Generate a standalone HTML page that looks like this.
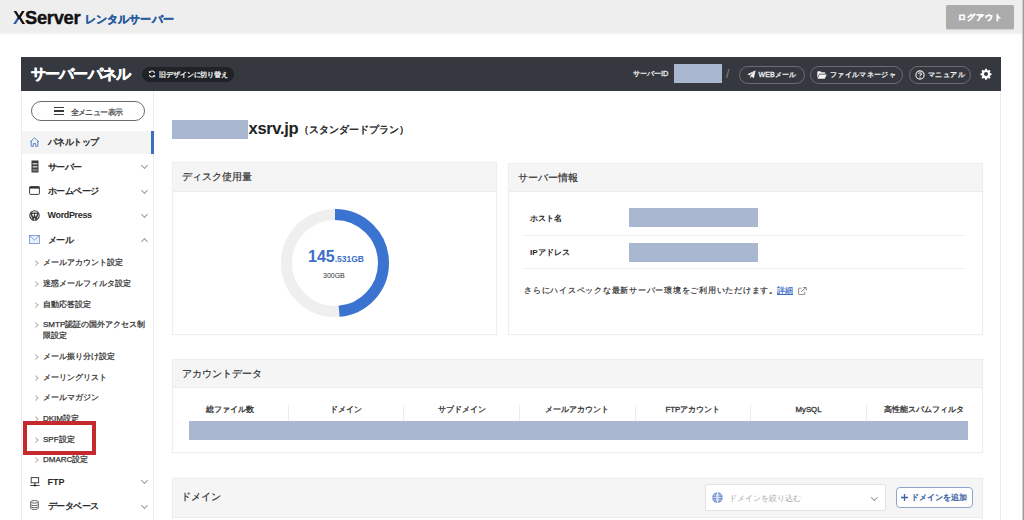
<!DOCTYPE html>
<html lang="ja">
<head>
<meta charset="utf-8">
<style>
*{box-sizing:border-box;margin:0;padding:0}
html,body{width:1024px;height:520px;overflow:hidden;background:#fff;font-family:"Liberation Sans",sans-serif;color:#333}
.abs{position:absolute}
#top{left:0;top:0;width:1024px;height:33px;background:#eeeeee;box-shadow:0 1px 2px rgba(0,0,0,.06)}
#rline{left:1022px;top:0;width:2px;height:520px;background:linear-gradient(to right,#d0d0d0 50%,#9c9c9c 50%)}
#logo{left:13px;top:8px;font-size:18.3px;line-height:20px;font-weight:bold;color:#111;letter-spacing:-0.25px;-webkit-text-stroke:0.4px #111;white-space:nowrap}
#logo .x{-webkit-text-stroke:0;background:linear-gradient(to top right,#2a5fa8 0%,#2a5fa8 38%,#111 46%);-webkit-background-clip:text;background-clip:text;color:transparent}
#logo .jp{position:absolute;left:71.5px;-webkit-text-stroke:0.35px #2a5c9f;top:1px;font-size:11.1px;color:#2a5c9f;letter-spacing:0.2px}
#logout{left:946px;top:5px;width:68px;height:23.5px;background:#ababab;color:#fff;font-size:8px;letter-spacing:0.9px;text-indent:0.9px;font-weight:bold;-webkit-text-stroke:0.3px #fff;text-align:center;line-height:25px;border-radius:1.5px;box-shadow:0 1px 1px rgba(0,0,0,.12)}
#ph{left:21px;top:57px;width:980px;height:34px;background:#35383f}
#ptitle{left:31px;top:64px;font-size:15px;font-weight:bold;-webkit-text-stroke:0.45px #fff;color:#fff;line-height:20px;white-space:nowrap;letter-spacing:-0.85px}
.pill{position:absolute;border:1px solid #6a6e73;border-radius:10px}
.htxt{color:#f0f0f0;font-weight:normal;-webkit-text-stroke:0.3px #f0f0f0;white-space:nowrap;line-height:10px}
#oldd{left:141px;top:66px;width:94px;height:16px;background:#24282c;border:none}
#sid{left:633px;top:68.5px;font-size:7.4px;font-weight:normal;-webkit-text-stroke:0.3px #f0f0f0;color:#f0f0f0;white-space:nowrap}
.blue{background:#a9b8d0}
#pb{left:21px;top:91px;width:980px;height:429px;border-left:1px solid #ececec;border-right:1px solid #ececec}
#side{left:22px;top:91px;width:132px;height:429px;border-right:1px solid #ececec}
.mi{position:absolute;left:22px;width:131px;height:24px;font-size:9px;letter-spacing:-0.5px;font-weight:normal;-webkit-text-stroke:0.4px #2a2a2a;color:#2a2a2a;white-space:nowrap}
.mi .t{position:absolute;left:25.5px;top:0;line-height:24px}
.mi .chev{position:absolute;left:119.5px;top:8.5px;width:5px;height:5px;border-right:1px solid #9a9a9a;border-bottom:1px solid #9a9a9a;transform:rotate(45deg)}
.mi .chev.up{top:11px;transform:rotate(-135deg)}
.si{position:absolute;left:22px;width:131px;font-size:8px;color:#333;-webkit-text-stroke:0.25px #333;white-space:nowrap;line-height:10.5px}
.si .t{position:absolute;left:21px;top:0}
.si .c{position:absolute;left:11.8px;top:3.3px;width:3.5px;height:3.5px;border-right:1px solid #b0b0b0;border-top:1px solid #b0b0b0;transform:rotate(45deg)}
.th{position:absolute;top:405px;width:115.6px;text-align:center;font-size:7.8px;font-weight:normal;color:#333;-webkit-text-stroke:0.3px #333;white-space:nowrap;line-height:10px}
.card{position:absolute;border:1px solid #eeeeee;background:#fff;box-shadow:0 0 1px rgba(0,0,0,.05)}
.card .hd{position:absolute;left:0;top:0;right:0;background:#f5f5f5;border-bottom:1px solid #ececec;font-size:9.5px;color:#333;padding-left:9px;white-space:nowrap;-webkit-text-stroke:0.2px #333}
</style>
</head>
<body>
<div id="top" class="abs"></div>
<div id="rline" class="abs"></div>
<div id="logo" class="abs"><span class="x">X</span>Server<span class="jp">レンタルサーバー</span></div>
<div id="logout" class="abs">ログアウト</div>

<div id="ph" class="abs"></div>
<div id="ptitle" class="abs">サーバーパネル</div>
<div class="abs" style="left:142px;top:66.5px;width:92px;height:15.5px;background:#1f2327;border-radius:8px"></div>
<svg class="abs" style="left:147.5px;top:70px" width="8" height="8" viewBox="0 0 8 8"><path d="M6.6 3.2A2.7 2.7 0 0 0 1.6 2.4" fill="none" stroke="#eee" stroke-width="1.1"/><path d="M1.4 4.8A2.7 2.7 0 0 0 6.4 5.6" fill="none" stroke="#eee" stroke-width="1.1"/><path d="M0.6 0.9L1.1 3.3L3.2 2.2Z" fill="#eee"/><path d="M7.4 7.1L6.9 4.7L4.8 5.8Z" fill="#eee"/></svg>
<div class="abs htxt" style="left:159px;top:69.5px;font-size:7px;letter-spacing:-0.1px">旧デザインに切り替え</div>
<div id="sid" class="abs">サーバーID</div>
<div class="abs blue" style="left:674px;top:63.5px;width:48px;height:19.5px"></div>
<div class="abs" style="left:726px;top:66px;font-size:12px;color:#888;line-height:16px">/</div>
<div class="pill" style="left:739px;top:65.5px;width:66px;height:18px"></div>
<svg class="abs" style="left:746.5px;top:69.5px" width="9" height="9" viewBox="0 0 9 9"><path d="M8.7 0.3L0.3 4.3L2.6 5.2L7.3 1.6L3.4 5.6L3.3 8.6L4.6 6.4L6.8 8.3Z" fill="#f2f2f2"/></svg>
<div class="abs htxt" style="left:758.5px;top:69.5px;font-size:7px;letter-spacing:0.1px">WEBメール</div>
<div class="pill" style="left:810px;top:65.5px;width:93px;height:18px"></div>
<svg class="abs" style="left:817px;top:70.5px" width="10" height="8" viewBox="0 0 10 8"><path d="M0.3 1.2Q0.3 0.3 1.2 0.3H3.4L4.3 1.3H7.6Q8.3 1.3 8.3 2V2.8H2.4L0.3 7Z" fill="#f2f2f2"/><path d="M2.6 3.4H9.8L7.8 7.7H0.5Z" fill="#f2f2f2"/></svg>
<div class="abs htxt" style="left:830px;top:69.5px;font-size:7px;letter-spacing:0.35px">ファイルマネージャ</div>
<div class="pill" style="left:909px;top:65.5px;width:62px;height:18px"></div>
<svg class="abs" style="left:915.3px;top:69.8px" width="10" height="10" viewBox="0 0 10 10"><circle cx="5" cy="5" r="4.1" fill="none" stroke="#eee" stroke-width="1.1"/><path d="M3.6 4Q3.6 2.7 5 2.7Q6.4 2.7 6.4 3.9Q6.4 4.6 5.5 5Q5 5.3 5 6" fill="none" stroke="#eee" stroke-width="1.1"/><circle cx="5" cy="7.3" r="0.65" fill="#eee"/></svg>
<div class="abs htxt" style="left:928px;top:69.5px;font-size:7px;letter-spacing:0.4px">マニュアル</div>
<svg class="abs" style="left:979.5px;top:68.3px" width="12" height="12" viewBox="0 0 24 24"><path fill="#fff" d="M13.7 1.5l.6 2.8c.7.2 1.3.5 1.9.8l2.4-1.6 2.4 2.4-1.6 2.4c.3.6.6 1.2.8 1.9l2.8.6v3.4l-2.8.6c-.2.7-.5 1.3-.8 1.9l1.6 2.4-2.4 2.4-2.4-1.600c-.6.3-1.2.6-1.9.8l-.6 2.8h-3.4l-.6-2.8c-.7-.2-1.300-.5-1.9-.8l-2.4 1.6-2.4-2.4 1.6-2.4c-.3-.6-.6-1.2-.8-1.9l-2.8-.6v-3.4l2.8-.6c.2-.7.5-1.3.8-1.9l-1.6-2.4 2.4-2.4 2.4 1.6c.6-.3 1.2-.6 1.9-.8l.6-2.8z M12 8a4 4 0 1 0 0 8a4 4 0 1 0 0-8z" fill-rule="evenodd"/></svg>
<div id="pb" class="abs"></div>
<div id="side" class="abs"></div>

<div class="abs" style="left:31px;top:101px;width:114px;height:20px;border:1px solid #6a6a6a;border-radius:10px"></div>
<div class="abs" style="left:54.3px;top:107.3px;width:9.7px;height:7.8px;border-top:1.6px solid #3a3a3a;border-bottom:1.6px solid #3a3a3a"></div>
<div class="abs" style="left:54.3px;top:110.4px;width:9.7px;height:1.6px;background:#3a3a3a"></div>
<div class="abs" style="left:70.5px;top:107.5px;font-size:8px;letter-spacing:-0.6px;color:#444;line-height:10px;-webkit-text-stroke:0.25px #444;white-space:nowrap">全メニュー表示</div>

<div class="abs" style="left:22px;top:131px;width:129px;height:23px;background:#f4f4f4"></div>
<div class="abs" style="left:151px;top:131px;width:3px;height:23px;background:#3b6fc0"></div>
<div class="mi" style="top:130px"><span class="t">パネルトップ</span></div>
<div class="mi" style="top:154.5px"><span class="t">サーバー</span><span class="chev"></span></div>
<div class="mi" style="top:179px"><span class="t">ホームページ</span><span class="chev"></span></div>
<div class="mi" style="top:203px"><span class="t" style="font-weight:bold;-webkit-text-stroke:0;letter-spacing:-0.35px">WordPress</span><span class="chev"></span></div>
<div class="mi" style="top:228px"><span class="t">メール</span><span class="chev up"></span></div>

<div class="si" style="top:258px"><span class="c"></span><span class="t">メールアカウント設定</span></div>
<div class="si" style="top:278.5px"><span class="c"></span><span class="t">迷惑メールフィルタ設定</span></div>
<div class="si" style="top:299.5px"><span class="c"></span><span class="t">自動応答設定</span></div>
<div class="si" style="top:320px"><span class="c"></span><span class="t">SMTP認証の国外アクセス制<br>限設定</span></div>
<div class="si" style="top:352px"><span class="c"></span><span class="t">メール振り分け設定</span></div>
<div class="si" style="top:372.5px"><span class="c"></span><span class="t">メーリングリスト</span></div>
<div class="si" style="top:393px"><span class="c"></span><span class="t">メールマガジン</span></div>
<div class="si" style="top:414px"><span class="c"></span><span class="t">DKIM設定</span></div>
<div class="si" style="top:435px"><span class="c"></span><span class="t">SPF設定</span></div>
<div class="si" style="top:455px"><span class="c"></span><span class="t">DMARC設定</span></div>
<div class="mi" style="top:469.5px"><span class="t" style="font-weight:bold;-webkit-text-stroke:0;letter-spacing:0">FTP</span><span class="chev"></span></div>
<div class="mi" style="top:494px"><span class="t">データベース</span><span class="chev"></span></div>

<svg class="abs" style="left:29px;top:136.5px" width="11" height="10" viewBox="0 0 11 10"><path d="M1 5L5.5 0.9L10 5M2.2 4V9.3H4.3V6.6H6.7V9.3H8.8V4" fill="none" stroke="#5b84cc" stroke-width="1" stroke-linejoin="round"/></svg>
<svg class="abs" style="left:30.5px;top:160px" width="8" height="13" viewBox="0 0 8 13"><rect x="0.5" y="0.5" width="7" height="12" fill="#3a3a3a"/><rect x="1.6" y="3.3" width="4.8" height="1.1" fill="#fff"/><rect x="1.6" y="6.3" width="4.8" height="1.1" fill="#fff"/><rect x="1.4" y="8.8" width="5.2" height="2.6" fill="#777"/></svg>
<svg class="abs" style="left:29px;top:186px" width="11" height="9" viewBox="0 0 11 9"><rect x="0.6" y="0.6" width="9.8" height="7.8" rx="0.8" fill="none" stroke="#333" stroke-width="0.95"/><rect x="0.6" y="0.6" width="9.8" height="2" fill="#333"/></svg>
<svg class="abs" style="left:29px;top:209.8px" width="11" height="11" viewBox="0 0 11 11"><circle cx="5.5" cy="5.5" r="4.7" fill="none" stroke="#3a3a3a" stroke-width="1.1"/><path d="M2.1 3.4L4.1 9.2L5.5 5.6L6.9 9.2L8.9 3.4M1.5 3.3H4.5M4.6 3.3H6.9M7.3 3.3H9.6" fill="none" stroke="#3a3a3a" stroke-width="1.5"/></svg>
<svg class="abs" style="left:29px;top:234.5px" width="11" height="9" viewBox="0 0 11 9"><rect x="0.5" y="0.5" width="10" height="8" fill="#eaf0fa" stroke="#7b9bd6" stroke-width="0.9"/><path d="M0.8 0.9L5.5 5L10.2 0.9" fill="none" stroke="#7b9bd6" stroke-width="0.9"/></svg>
<svg class="abs" style="left:30px;top:477px" width="10" height="10" viewBox="0 0 10 10"><rect x="1.2" y="0.6" width="7.4" height="5.2" fill="none" stroke="#444" stroke-width="1"/><path d="M4.9 5.8V8.3M0.3 8.5H9.6" stroke="#444" stroke-width="1"/><circle cx="4.9" cy="8.4" r="1" fill="#222"/></svg>
<svg class="abs" style="left:30px;top:500px" width="9" height="10" viewBox="0 0 9 10"><ellipse cx="4.5" cy="1.8" rx="3.8" ry="1.3" fill="none" stroke="#555" stroke-width="0.9"/><path d="M0.7 1.8V8.2Q0.7 9.5 4.5 9.5Q8.3 9.5 8.3 8.2V1.8M0.7 4.3Q0.7 5.6 4.5 5.6Q8.3 5.6 8.3 4.3M0.7 6.4Q0.7 7.7 4.5 7.7Q8.3 7.7 8.3 6.4" fill="none" stroke="#555" stroke-width="0.9"/></svg>
<div class="abs" style="left:23px;top:421px;width:72.5px;height:33.5px;border:4px solid #c62a2e"></div>


<!-- main -->
<div class="abs blue" style="left:172px;top:120px;width:76px;height:19px"></div>
<div class="abs" style="left:248.5px;top:118px;font-size:16.5px;letter-spacing:-0.3px;font-weight:bold;color:#222;line-height:20px;white-space:nowrap">xsrv.jp</div>
<div class="abs" style="left:298.5px;top:123.5px;font-size:9.5px;font-weight:normal;-webkit-text-stroke:0.4px #222;color:#222;line-height:12px;white-space:nowrap">（スタンダードプラン）</div>

<div class="card" style="left:172px;top:162px;width:325px;height:173px"><div class="hd" style="height:29px;line-height:28px">ディスク使用量</div></div>
<svg class="abs" style="left:280px;top:208px" width="110" height="110" viewBox="0 0 110 110">
<circle cx="55" cy="55" r="48.5" fill="none" stroke="#efefef" stroke-width="11"/>
<circle cx="55" cy="55" r="48.5" fill="none" stroke="#3b73d1" stroke-width="11" stroke-dasharray="147.9 400" transform="rotate(-90 55 55)"/>
</svg>
<div class="abs" style="left:308px;top:249px;font-weight:bold;color:#3b6fc8;white-space:nowrap;line-height:16px"><span style="font-size:16px">145</span><span style="font-size:8.5px">.531GB</span></div>
<div class="abs" style="left:323px;top:271px;font-size:7px;color:#333;white-space:nowrap;line-height:9px">300GB</div>

<div class="card" style="left:508px;top:163px;width:475px;height:172px"><div class="hd" style="height:28px;line-height:27px">サーバー情報</div></div>
<div class="abs" style="left:530px;top:214px;font-size:8px;font-weight:bold;color:#222;white-space:nowrap;line-height:10px">ホスト名</div>
<div class="abs blue" style="left:629px;top:208px;width:129px;height:19px"></div>
<div class="abs" style="left:524px;top:235px;width:441px;height:1px;background:#f0f0f0"></div>
<div class="abs" style="left:530px;top:248px;font-size:8px;font-weight:bold;color:#222;white-space:nowrap;line-height:10px">IPアドレス</div>
<div class="abs blue" style="left:629px;top:243px;width:129px;height:19px"></div>
<div class="abs" style="left:524px;top:268px;width:441px;height:1px;background:#f0f0f0"></div>
<div class="abs" style="left:524px;top:285.5px;font-size:8px;letter-spacing:0.75px;color:#333;-webkit-text-stroke:0.2px #333;white-space:nowrap;line-height:10px">さらにハイスペックな最新サーバー環境をご利用いただけます。</div>
<svg class="abs" style="left:798px;top:287px" width="9" height="8" viewBox="0 0 9 8"><path d="M3.5 1.2H0.6V7.4H6.8V4.6" fill="none" stroke="#888" stroke-width="0.9"/><path d="M3.3 4.7L7.8 0.6M5.2 0.5H8.2V3.4" fill="none" stroke="#777" stroke-width="0.9"/></svg>
<div class="abs" style="left:777px;top:285.5px;font-size:8px;color:#3b6fc8;-webkit-text-stroke:0.2px #3b6fc8;white-space:nowrap;line-height:10px;text-decoration:underline">詳細</div>

<div class="card" style="left:172px;top:359px;width:811px;height:94px"><div class="hd" style="height:28px;line-height:27px">アカウントデータ</div></div>
<div class="th" style="left:172.5px">総ファイル数</div>
<div class="th" style="left:288.1px">ドメイン</div>
<div class="abs" style="left:287.6px;top:405px;width:1px;height:18px;background:#ececec"></div>
<div class="th" style="left:403.8px">サブドメイン</div>
<div class="abs" style="left:403.3px;top:405px;width:1px;height:18px;background:#ececec"></div>
<div class="th" style="left:519.4px">メールアカウント</div>
<div class="abs" style="left:518.9px;top:405px;width:1px;height:18px;background:#ececec"></div>
<div class="th" style="left:635.1px">FTPアカウント</div>
<div class="abs" style="left:634.6px;top:405px;width:1px;height:18px;background:#ececec"></div>
<div class="th" style="left:750.7px">MySQL</div>
<div class="abs" style="left:750.2px;top:405px;width:1px;height:18px;background:#ececec"></div>
<div class="th" style="left:866.3px">高性能スパムフィルタ</div>
<div class="abs" style="left:865.8px;top:405px;width:1px;height:18px;background:#ececec"></div>
<div class="abs blue" style="left:189px;top:421px;width:779px;height:18.5px"></div>

<div class="card" style="left:172px;top:478px;width:811px;height:60px"><div class="hd" style="height:39px;line-height:36px;padding-left:8px">ドメイン</div></div>
<div class="abs" style="left:705px;top:484px;width:181px;height:27px;background:#fff;border:1px solid #e3e3e3;border-radius:2px"></div>
<svg class="abs" style="left:712px;top:492.3px" width="11" height="11" viewBox="0 0 11 11"><circle cx="5.5" cy="5.5" r="5.3" fill="#6f90d2"/><path d="M5.5 0.6V10.4M0.6 5.5H10.4M5.5 0.6Q2.5 5.5 5.5 10.4M5.5 0.6Q8.5 5.5 5.5 10.4M1.4 3H9.6M1.4 8H9.6" fill="none" stroke="#fff" stroke-width="0.6"/></svg>
<div class="abs" style="left:728.5px;top:493.5px;font-size:8px;letter-spacing:0.1px;color:#aaa;white-space:nowrap;line-height:10px">ドメインを絞り込む</div>
<div class="abs" style="left:872px;top:494.5px;width:4.6px;height:4.6px;border-right:1px solid #8a8a8a;border-bottom:1px solid #8a8a8a;transform:rotate(45deg)"></div>
<div class="abs" style="left:895.5px;top:487px;width:77px;height:21px;background:#fff;border:1px solid #8fa5cc;border-radius:4px"></div>
<svg class="abs" style="left:901px;top:494px" width="7" height="7" viewBox="0 0 7 7"><path d="M3.5 0V7M0 3.5H7" stroke="#3d62a3" stroke-width="1.3"/></svg>
<div class="abs" style="left:910.5px;top:493px;font-size:8px;letter-spacing:0.1px;line-height:10px;white-space:nowrap;-webkit-text-stroke:0.35px #3d62a3;color:#3d62a3">ドメインを追加</div>
</body>
</html>
